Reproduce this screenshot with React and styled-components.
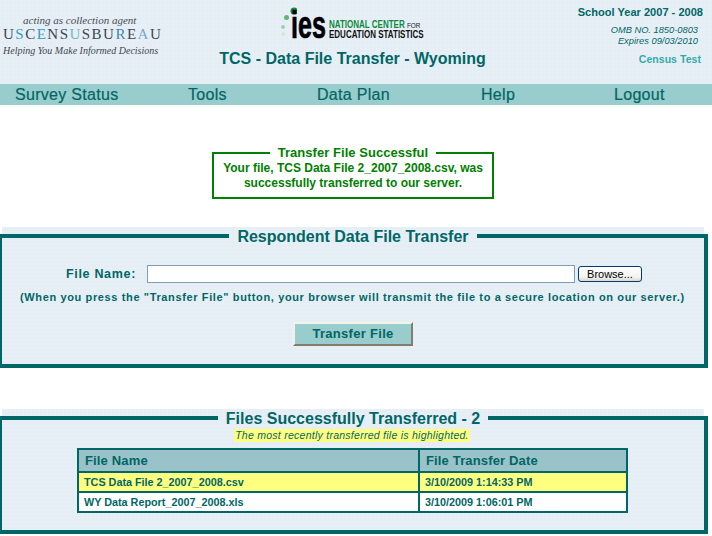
import React from "react";
import styled, { createGlobalStyle } from "styled-components";

const Global = createGlobalStyle`
  html, body { margin: 0; padding: 0; background: #fff; }
  body { font-family: "Liberation Sans", Arial, sans-serif; color: #006666; overflow: hidden; }
`;
const Page = styled.div`width: 712px; height: 536px; overflow: hidden;`;
const dots = `
  background-color: #e6eef5;
  background-image: radial-gradient(circle at 1px 1px, #e8f0f6 1px, transparent 1px);
  background-size: 4px 4px;
`;
const Header = styled.header`
  ${dots}
  height: 84px;
  display: grid;
  grid-template-columns: 170px 1fr 170px;
`;
const CensusBlock = styled.div`
  padding-top: 14px;
  display: flex;
  flex-direction: column;
  align-items: flex-start;
`;
const Acting = styled.div`
  font: italic 11px/13px "Liberation Serif", serif;
  color: #444c58;
  padding-left: 23px;
`;
const Bureau = styled.div`
  font: 15px/14px "Liberation Serif", serif;
  color: #3a4658;
  padding-left: 3px;
  letter-spacing: 1.48px;
  white-space: nowrap;
`;
const Tint = styled.span`color: ${p => p.$c};`;
const Tagline = styled.div`
  font: italic 10px/13px "Liberation Serif", serif;
  color: #3d4550;
  padding-left: 3px;
  margin-top: 3px;
  white-space: nowrap;
`;
const CenterBlock = styled.div`
  display: flex;
  flex-direction: column;
  align-items: center;
  padding: 6px 7px 0 0;
`;
const Logo = styled.div`
  display: flex;
  align-items: flex-end;
  height: 32px;
  margin-right: 3px;
`;
const Mark = styled.svg`
  display: block;
  width: 18px;
  height: 32px;
  margin-right: -6px;
`;
const Ies = styled.span`
  font: 700 38px/26px "Liberation Sans", sans-serif;
  color: #000;
  -webkit-text-stroke: .7px #000;
  width: 38px;
  height: 26px;
  transform: scaleX(.66);
  transform-origin: left bottom;
`;
const LogoWords = styled.div`
  display: flex;
  flex-direction: column;
  width: 95px;
  margin-bottom: -1px;
  font: 700 10px/8.5px "Liberation Sans", sans-serif;
  white-space: nowrap;
  transform: scaleX(.8);
  transform-origin: left bottom;
`;
const Nces = styled.span`color: #0b8a3c;`;
const NcesFor = styled.span`color: #222; font-weight: 400; font-size: 8px;`;
const Edu = styled.span`color: #111;`;
const Title = styled.h1`
  margin: 11px 0 0;
  font: 700 16px/20px "Liberation Sans", sans-serif;
  color: #006666;
  white-space: nowrap;
`;
const RightBlock = styled.div`
  display: flex;
  flex-direction: column;
  align-items: flex-end;
  padding: 5px 9px 0 0;
`;
const Year = styled.div`font: 700 11px/14px "Liberation Sans", sans-serif; letter-spacing: .03px; white-space: nowrap;`;
const Omb = styled.div`font: italic 9.3px/11px "Liberation Sans", sans-serif; color: #006666; padding-right: 5px; white-space: nowrap;`;
const OmbFirst = styled(Omb)`margin-top: 6px;`;
const Test = styled.div`font: 700 10.5px/14px "Liberation Sans", sans-serif; color: #33aaaa; letter-spacing: .05px; margin-top: 5px; padding-right: 2px;`;

const Nav = styled.nav`
  box-sizing: border-box;
  height: 21px;
  background: #99cccc;
  display: grid;
  grid-template-columns: 173px 129px 164px 133px 1fr;
  padding-left: 15px;
`;
const NavItem = styled.a`
  font: 400 16px/22px "Liberation Sans", sans-serif;
  letter-spacing: .3px;
  color: #006666;
  -webkit-text-stroke: .2px #006666;
`;

const Success = styled.fieldset`
  box-sizing: border-box;
  width: 282px;
  height: 54px;
  margin: 40px 0 0 212px;
  padding: 0;
  border: 2px solid #008000;
  color: #008000;
  text-align: center;
  font: 700 12px/15px "Liberation Sans", sans-serif;
  min-width: 0;
`;
const SuccessLegend = styled.legend`
  margin: 0 auto;
  padding: 0 8px;
  font: 700 13px/16px "Liberation Sans", sans-serif;
  letter-spacing: .04px;
`;
const SuccessLine = styled.div`white-space: nowrap;`;

const Panel = styled.section`
  ${dots}
  margin: ${p => p.$top}px 0 0 2px;
  width: 702px;
  height: ${p => p.$h}px;
`;
const Field = styled.fieldset`
  box-sizing: border-box;
  margin: 0 -4px;
  padding: 0;
  width: 710px;
  height: 100%;
  border: 4px solid #006666;
  min-width: 0;
`;
const FieldLegend = styled.legend`
  margin: 0 auto;
  padding: 2px 8px 0;
  font: 700 16px/16px "Liberation Sans", sans-serif;
  color: #006666;
  white-space: nowrap;
`;
const FileRow = styled.div`
  display: flex;
  align-items: center;
  margin-top: 20px;
  height: 18px;
`;
const FileLabel = styled.label`
  font: 700 12.5px/18px "Liberation Sans", sans-serif;
  letter-spacing: .68px;
  margin-left: 64px;
  width: 81px;
  white-space: nowrap;
`;
const FileInput = styled.div`
  box-sizing: border-box;
  width: 428px;
  height: 18px;
  background: #fff;
  border: 1px solid #7f9db9;
`;
const Browse = styled.button`
  box-sizing: border-box;
  width: 64px;
  height: 16px;
  margin-left: 3px;
  padding: 0;
  border: 1px solid #003c74;
  border-radius: 3px;
  background: linear-gradient(#ffffff, #f4f3ee 70%, #dcd8ce);
  color: #000;
  font: 400 11px/14px "Liberation Sans", sans-serif;
`;
const Hint = styled.p`
  margin: 7px 0 0;
  padding-left: 18px;
  font: 700 11px/14px "Liberation Sans", sans-serif;
  letter-spacing: .63px;
  white-space: nowrap;
`;
const SubmitWrap = styled.div`
  display: flex;
  justify-content: center;
  margin-top: 18px;
`;
const Submit = styled.button`
  box-sizing: border-box;
  width: 120px;
  height: 24px;
  padding: 0;
  background: #99cccc;
  color: #006666;
  border: 2px solid;
  border-color: #f2f2e6 #857d6c #857d6c #f2f2e6;
  font: 700 13px/20px "Liberation Sans", sans-serif;
  letter-spacing: .3px;
`;
const NoteWrap = styled.div`
  display: flex;
  justify-content: center;
  margin-top: 2px;
`;
const Note = styled.span`
  background: #ffff80;
  font: italic 10.5px/13px "Liberation Sans", sans-serif;
  color: #006666;
  letter-spacing: .26px;
  white-space: nowrap;
  padding: 0 1px 0 1px;
  margin-right: 2px;
`;
const Table = styled.table`
  box-sizing: border-box;
  border-collapse: collapse;
  width: 551px;
  margin: 6px 0 0 75px;
  table-layout: fixed;
  border: 2px solid #006666;
`;
const Head = styled.th`
  height: 20px;
  background: #99c3c9;
  border: 2px solid #006666;
  padding: 1px 0 0 6px;
  text-align: left;
  font: 700 13px/18px "Liberation Sans", sans-serif;
  letter-spacing: .15px;
  color: #006666;
`;
const Cell = styled.td`
  height: 18px;
  background: ${p => (p.$hi ? "#ffff80" : "#fff")};
  border: 2px solid #006666;
  padding: 0 0 0 5px;
  font: 700 10.8px/14px "Liberation Sans", sans-serif;
  color: #006666;
  white-space: nowrap;
`;
const ColA = styled.col`width: 341px;`;

function IesMark() {
  return (
    <Mark viewBox="0 0 18 32">
      <circle cx="15" cy="5" r="3.5" fill="#0b8a3c" />
      <circle cx="7.5" cy="11.5" r="2.5" fill="#5fb577" />
      <circle cx="4" cy="21" r="2" fill="#9ed0ac" />
      <circle cx="4.5" cy="28" r="2" fill="#d3e8d8" />
    </Mark>
  );
}

export default function App() {
  return (
    <Page>
      <Global />
      <Header>
        <CensusBlock>
          <Acting>acting as collection agent</Acting>
          <Bureau>
            U<Tint $c="#2f9fc0">S</Tint>C<Tint $c="#2f9fc0">E</Tint>NS<Tint $c="#6fb6cf">U</Tint>SBU<Tint $c="#3e86ad">R</Tint>E<Tint $c="#7aa9cc">A</Tint>U
          </Bureau>
          <Tagline>Helping You Make Informed Decisions</Tagline>
        </CensusBlock>
        <CenterBlock>
          <Logo>
            <IesMark />
            <Ies>ies</Ies>
            <LogoWords>
              <span><Nces>NATIONAL CENTER </Nces><NcesFor>FOR</NcesFor></span>
              <Edu>EDUCATION STATISTICS</Edu>
            </LogoWords>
          </Logo>
          <Title>TCS - Data File Transfer - Wyoming</Title>
        </CenterBlock>
        <RightBlock>
          <Year>School Year 2007 - 2008</Year>
          <OmbFirst>OMB NO. 1850-0803</OmbFirst>
          <Omb>Expires 09/03/2010</Omb>
          <Test>Census Test</Test>
        </RightBlock>
      </Header>
      <Nav>
        <NavItem>Survey Status</NavItem>
        <NavItem>Tools</NavItem>
        <NavItem>Data Plan</NavItem>
        <NavItem>Help</NavItem>
        <NavItem>Logout</NavItem>
      </Nav>
      <Success>
        <SuccessLegend>Transfer File Successful</SuccessLegend>
        <SuccessLine>Your file, TCS Data File 2_2007_2008.csv, was</SuccessLine>
        <SuccessLine>successfully transferred to our server.</SuccessLine>
      </Success>
      <Panel $top={28} $h={141}>
        <Field>
          <FieldLegend>Respondent Data File Transfer</FieldLegend>
          <FileRow>
            <FileLabel>File Name:</FileLabel>
            <FileInput />
            <Browse type="button">Browse...</Browse>
          </FileRow>
          <Hint>(When you press the "Transfer File" button, your browser will transmit the file to a secure location on our server.)</Hint>
          <SubmitWrap>
            <Submit type="button">Transfer File</Submit>
          </SubmitWrap>
        </Field>
      </Panel>
      <Panel $top={41} $h={125}>
        <Field>
          <FieldLegend>Files Successfully Transferred - 2</FieldLegend>
          <NoteWrap>
            <Note>The most recently transferred file is highlighted.</Note>
          </NoteWrap>
          <Table>
            <colgroup>
              <ColA />
              <col />
            </colgroup>
            <thead>
              <tr>
                <Head>File Name</Head>
                <Head>File Transfer Date</Head>
              </tr>
            </thead>
            <tbody>
              <tr>
                <Cell $hi>TCS Data File 2_2007_2008.csv</Cell>
                <Cell $hi>3/10/2009 1:14:33 PM</Cell>
              </tr>
              <tr>
                <Cell>WY Data Report_2007_2008.xls</Cell>
                <Cell>3/10/2009 1:06:01 PM</Cell>
              </tr>
            </tbody>
          </Table>
        </Field>
      </Panel>
    </Page>
  );
}
